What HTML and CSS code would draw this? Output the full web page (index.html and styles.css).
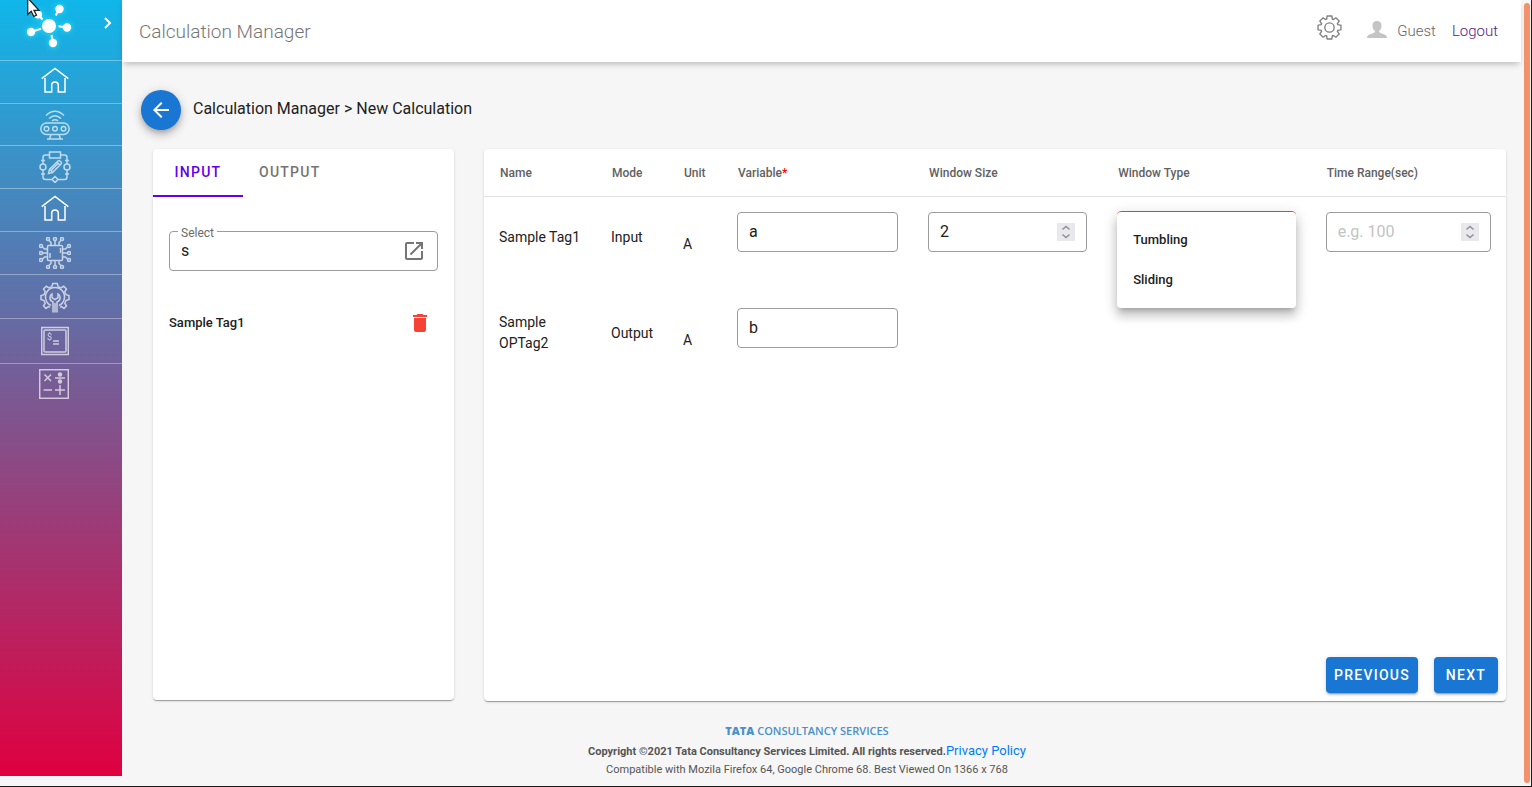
FILE: index.html
```
<!DOCTYPE html>
<html lang="en">
<head>
<meta charset="utf-8">
<meta name="viewport" content="width=device-width, initial-scale=1">
<title>Calculation Manager</title>
<link rel="stylesheet" href="styles.css">
</head>
<body>
<svg class="defs" aria-hidden="true">
  <symbol id="gear" viewBox="-12 -12 24 24">
    <path d="M-2.2-11H2.2L2.8-8 3.7-7.6 6.2-9.3 9.3-6.2 7.6-3.7 8-2.8 11-2.2V2.2L8 2.8 7.6 3.7 9.3 6.2 6.2 9.3 3.7 7.6 2.8 8 2.2 11H-2.2L-2.8 8-3.7 7.6-6.2 9.3-9.3 6.2-7.6 3.7-8 2.8-11 2.2V-2.2L-8-2.8-7.6-3.7-9.3-6.2-6.2-9.3-3.7-7.6-2.8-8Z"/>
    <circle r="4.5"/>
  </symbol>
  <symbol id="home" viewBox="0 0 28 26">
    <path d="M.7 11.7 14 1.5l13.3 10.2M4 11v14h6.7v-6.700a3.300 3.300 0 0 1 6.600 0V25H24V11"/>
  </symbol>
  <symbol id="steps" viewBox="0 0 18 18">
    <path d="M5.500 6.500 9 3.500l3.500 3M5.500 11.500 9 14.500l3.500-3"/>
  </symbol>
</svg>
<div class="app">
  <nav class="sidebar" aria-label="Main">
    <div class="brand">
      <svg class="brand-logo" width="60" height="60" viewBox="0 0 60 60" aria-hidden="true">
        <path stroke="#fff" stroke-width="2" d="m29 9-3.200 6.500M8 14l4.500 5.500M1 32l10-3.300M23 43l-1.500-8M37 27.500l-8.500-1.200"/>
        <g fill="#fff"><circle cx="19" cy="26" r="7"/><circle cx="29.500" cy="9" r="4.200"/><circle cx="8" cy="14.500" r="4"/><circle cx="1" cy="32" r="4.200"/><circle cx="23" cy="43" r="4.200"/><circle cx="37" cy="27.500" r="4.200"/></g>
      </svg>
      <button class="expand" type="button" aria-label="Expand menu">
        <svg width="10" height="14" viewBox="0 0 10 14"><path d="m2 2 5 5-5 5"/></svg>
      </button>
    </div>
    <a class="nav-item nav-item--bright" href="#" aria-label="Home"><svg width="28" height="26"><use href="#home"/></svg></a>
    <a class="nav-item nav-item--short" href="#" aria-label="Devices">
      <svg width="30" height="30" viewBox="0 0 30 30"><path d="M6 5.500q9-8.500 18 0M9 8.500q6-5.500 12 0M12 10.800q3-2 6 0"/><rect x=".8" y="13" width="28.400" height="11.400" rx="5.700"/><circle cx="6.500" cy="18.700" r="2.300"/><circle cx="15" cy="18.700" r="2.300"/><circle cx="23.500" cy="18.700" r="2.300"/><path d="m11 24.500-1.500 4.500m9.500-4.500 1.500 4.500M7 29h16"/></svg>
    </a>
    <a class="nav-item" href="#" aria-label="Workflow">
      <svg width="32" height="32" viewBox="0 0 32 32"><rect x="10.500" y="1" width="11" height="6"/><circle cx="4" cy="16" r="3"/><circle cx="28" cy="16" r="3"/><path d="m16 25.500 3 3-3 3-3-3ZM10.500 4H6.500Q4 4 4 6.500V13m17.500-9h4Q28 4 28 6.500V13M4 19v7q0 2.500 2.500 2.500H13m6 0h6.500q2.500 0 2.500-2.500v-7M2 9.500h4m20 0h4M2 23h4m20 0h4M9.500 22.500l1-4 8.500-8.500q1-.8 2 0l1 1q.8 1 0 2l-8.500 8.500zM11 18.500l3 3M18 11l3 3m-8.500 5 7-7"/></svg>
    </a>
    <a class="nav-item nav-item--bright" href="#" aria-label="Assets"><svg width="28" height="26"><use href="#home"/></svg></a>
    <a class="nav-item" href="#" aria-label="Processing">
      <svg width="32" height="32" viewBox="0 0 32 32"><rect x="8.500" y="8.500" width="15" height="15" rx="1"/><path d="M11 16v5M21.500 11v5M16 8.500V3.500M12 8.500V5.500L10 3.500m10 5v-3l2-2M16 23.500v5m-4-5v3l-2 2m10-5v3l2 2M8.500 16h-5m5-4h-3l-2-2m5 10h-3l-2 2M23.500 16h5m-5-4h3l2-2m-5 10h3l2 2"/><g><circle cx="16" cy="2" r="1.500"/><circle cx="9" cy="2" r="1.500"/><circle cx="23" cy="2" r="1.500"/><circle cx="16" cy="30" r="1.500"/><circle cx="9" cy="30" r="1.500"/><circle cx="23" cy="30" r="1.500"/><circle cx="2" cy="16" r="1.500"/><circle cx="2" cy="9" r="1.500"/><circle cx="2" cy="23" r="1.500"/><circle cx="30" cy="16" r="1.500"/><circle cx="30" cy="9" r="1.500"/><circle cx="30" cy="23" r="1.500"/></g></svg>
    </a>
    <a class="nav-item nav-item--tall" href="#" aria-label="Maintenance">
      <svg width="30" height="32" viewBox="0 0 30 32"><path d="M10 26.500 8.500 25.500 6 27.500 3.500 25 5.200 22.200 4 19.500 1 18.500v-4l3-.8 1.200-3L3.500 8 6.200 5.300 9 7l2.800-1.200L12.800 2.500h4.400l1 3.300L21 7l2.800-1.700L26.500 8l-1.700 2.700 1.200 3 3 .8v4l-3 1-1.200 2.700 1.700 2.800-2.500 2.500-2.500-2-1.500 1"/><path d="M11 24.500a9.500 9.500 0 1 1 8 0M13 31.500V21q-3.500-1.500-3-5 .2-2 2-3v3.500l3 2 3-2V13q1.800 1 2 3 .5 3.500-3 5v10.500M15 22v9.500"/></svg>
    </a>
    <a class="nav-item nav-item--console" href="#" aria-label="Console">
      <svg width="28" height="30" viewBox="0 0 28 30"><rect x=".7" y="1.500" width="26.600" height="27"/><rect x="3" y="4" width="22" height="22" rx="1"/><path d="M12 15h6m-6 3h6"/><text x="6" y="14">$</text></svg>
    </a>
    <a class="nav-item nav-item--last" href="#" aria-label="Calculations">
      <svg width="30" height="30" viewBox="0 0 30 30"><rect x=".7" y=".7" width="28.600" height="28.600"/><path d="m5.500 5.500 6.500 6.500m0-6.500L5.500 12M16 9h10M4.500 21H13m3 0h10m-5-5v10"/><circle class="dot" cx="21" cy="5.500" r="1.500"/><circle class="dot" cx="21" cy="12.500" r="1.500"/></svg>
    </a>
  </nav>

  <div class="main">
    <header class="topbar">
      <h1 class="topbar-title">Calculation Manager</h1>
      <div class="topbar-actions">
        <button class="icon-button settings" type="button" aria-label="Settings"><svg width="25" height="25"><use href="#gear"/></svg></button>
        <span class="user">
          <svg width="20" height="18" viewBox="0 0 20 18" aria-hidden="true"><path d="M10 0c3 0 4.500 2 4.500 4.700C14.500 7 13.500 9 12 10c.2 1.500 1 2 3.500 2.700C18.500 13.500 20 14.500 20 17H0c0-2.500 1.500-3.500 4.500-4.300C7 12 7.800 11.500 8 10 6.500 9 5.500 7 5.500 4.700 5.500 2 7 0 10 0Z"/></svg>
          Guest
        </span>
        <a class="logout" href="#">Logout</a>
      </div>
    </header>

    <main class="content">
      <div class="crumbs">
        <button class="back" type="button" aria-label="Back"><svg width="24" height="24" viewBox="0 0 24 24"><path d="M20 11H7.830l5.590-5.590L12 4l-8 8 8 8 1.410-1.410L7.830 13H20v-2z"/></svg></button>
        <h2 class="crumbs-text">Calculation Manager &gt; New Calculation</h2>
      </div>

      <div class="panels">
        <section class="card tags">
          <div class="tabs" role="tablist">
            <button class="tab tab--active" type="button" role="tab" aria-selected="true">INPUT</button>
            <button class="tab" type="button" role="tab" aria-selected="false">OUTPUT</button>
          </div>
          <div class="tags-body">
            <div class="field tag-search">
              <label class="field-label" for="tag">Select</label>
              <input class="field-input" id="tag" type="text" value="s">
              <button class="icon-button open" type="button" aria-label="Open tag browser"><svg width="24" height="24" viewBox="0 0 24 24"><path d="M19 19H5V5h7V3H5a2 2 0 0 0-2 2v14a2 2 0 0 0 2 2h14c1.100 0 2-.9 2-2v-7h-2v7zM14 3v2h3.590l-9.830 9.830 1.410 1.410L19 6.410V10h2V3h-7z"/></svg></button>
            </div>
            <div class="tag-row">
              <span class="tag-name">Sample Tag1</span>
              <button class="icon-button delete" type="button" aria-label="Delete Sample Tag1"><svg width="24" height="24" viewBox="0 0 24 24"><path d="M6 19c0 1.100.9 2 2 2h8c1.100 0 2-.9 2-2V7H6v12zM19 4h-3.500l-1-1h-5l-1 1H5v2h14V4z"/></svg></button>
            </div>
          </div>
        </section>

        <section class="card variables">
          <table class="grid">
            <colgroup><col class="c-name"><col class="c-mode"><col class="c-unit"><col class="c-variable"><col class="c-size"><col class="c-type"><col></colgroup>
            <thead>
              <tr><th>Name</th><th>Mode</th><th>Unit</th><th>Variable<span class="required">*</span></th><th>Window Size</th><th>Window Type</th><th>Time Range(sec)</th></tr>
            </thead>
            <tbody>
              <tr>
                <td class="text">Sample Tag1</td>
                <td class="text">Input</td>
                <td>A</td>
                <td class="control"><div class="field"><input class="field-input" type="text" value="a" aria-label="Variable for Sample Tag1"></div></td>
                <td class="control"><div class="field"><input class="field-input" type="number" value="2" aria-label="Window size"><svg class="steps" width="18" height="18" aria-hidden="true"><use href="#steps"/></svg></div></td>
                <td class="control control--select">
                  <div class="picker">
                    <select class="picker-select" aria-label="Window type"><option></option><option>Tumbling</option><option>Sliding</option></select>
                    <ul class="menu" role="listbox"><li role="option">Tumbling</li><li role="option">Sliding</li></ul>
                  </div>
                </td>
                <td class="control"><div class="field"><input class="field-input" type="number" placeholder="e.g. 100" aria-label="Time range in seconds"><svg class="steps" width="18" height="18" aria-hidden="true"><use href="#steps"/></svg></div></td>
              </tr>
              <tr>
                <td class="text">Sample OPTag2</td>
                <td class="text">Output</td>
                <td>A</td>
                <td class="control"><div class="field"><input class="field-input" type="text" value="b" aria-label="Variable for Sample OPTag2"></div></td>
                <td></td><td></td><td></td>
              </tr>
            </tbody>
          </table>
          <div class="actions">
            <button class="button" type="button">PREVIOUS</button>
            <button class="button button--next" type="button">NEXT</button>
          </div>
        </section>
      </div>
    </main>

    <footer class="footer">
      <div class="company"><strong>TATA</strong> CONSULTANCY SERVICES</div>
      <div class="copyright"><b>Copyright ©2021 Tata Consultancy Services Limited. All rights reserved.</b><a href="#">Privacy Policy</a></div>
      <div class="compat">Compatible with Mozila Firefox 64, Google Chrome 68. Best Viewed On 1366 x 768</div>
    </footer>
  </div>
  <div class="rail" aria-hidden="true"><div class="rail-thumb"></div></div>
</div>
<svg class="pointer" width="14" height="19" viewBox="0 0 14 19" aria-hidden="true"><path d="M.7-2v16.500l3.500-3.200 2.600 5.200 2.700-1.300L7 10.300h5z"/></svg>
</body>
</html>
```
FILE: styles.css
```
*, *::before, *::after { box-sizing: border-box; }

body {
  margin: 0;
  font-family: Roboto, "Liberation Sans", sans-serif;
  font-size: 14px;
  color: #212121;
  background: #f6f6f6;
}

button, input, select { font: inherit; color: inherit; }
button { padding: 0; border: 0; background: none; cursor: pointer; }
svg { display: block; }
.defs { position: absolute; width: 0; height: 0; }

.app {
  display: flex;
  min-height: 100vh;
  border: solid #1c1c1c;
  border-width: 0 1px 1px 0;
}

/* Sidebar */
.sidebar {
  flex: none;
  width: 122px;
  margin-bottom: 10px;
  background: linear-gradient(#10b6e9, #e00040);
}
.brand {
  display: flex;
  height: 61px;
  padding-left: 30px;
  border-bottom: 1px solid rgba(255, 255, 255, .35);
}
.brand-logo { overflow: visible; filter: drop-shadow(0 0 3px #2ef); }
.expand { align-self: flex-start; margin: 16px 0 0 13px; }
.expand path { fill: none; stroke: #fff; stroke-width: 2; }
.nav-item {
  display: flex;
  align-items: center;
  justify-content: center;
  height: 43px;
  padding-right: 12px;
  border-bottom: 1px solid rgba(255, 255, 255, .35);
}
.nav-item--short { height: 42px; }
.nav-item--tall { height: 44px; }
.nav-item--console { height: 45px; padding-right: 13px; }
.nav-item--last { padding: 0 14px 4px 0; border: 0; }
.nav-item svg { fill: none; stroke: #fff; stroke-width: 1.5; opacity: .68; }
.nav-item--bright { padding-bottom: 4px; }
.nav-item--bright svg { opacity: 1; stroke-width: 1.5; }
.nav-item text { font-size: 9px; fill: #fff; stroke: none; }
.nav-item .dot { fill: #fff; }

/* Header */
.main { flex: 1; min-width: 0; display: flex; flex-direction: column; }
.topbar {
  display: flex;
  align-items: center;
  justify-content: space-between;
  height: 62px;
  padding: 0 23px 0 17px;
  background: #fff;
  box-shadow: 0 4px 6px -2px rgba(0, 0, 0, .25);
}
.topbar-title { margin: 0; font-size: 19px; font-weight: 300; color: #757575; }
.topbar-actions { display: flex; align-items: center; font-size: 15px; font-weight: 300; }
.settings { margin: 0 25px 7px 0; }
.settings svg { fill: none; stroke: #808080; stroke-width: 1.3; }
.user { display: flex; align-items: center; gap: 10px; color: #666; }
.user svg { margin-bottom: 2px; fill: #c4c4c4; }
.logout { margin-left: 16px; color: #551a8b; text-decoration: none; }

/* Page content */
.content { flex: 1; display: flex; flex-direction: column; padding: 28px 15px 0 19px; }
.crumbs { display: flex; align-items: center; gap: 12px; }
.crumbs-text { margin: 0 0 4px; font-size: 16px; font-weight: 400; }
.back {
  display: flex;
  align-items: center;
  justify-content: center;
  width: 40px;
  height: 40px;
  border-radius: 50%;
  background: #1976d2;
  box-shadow: 0 3px 5px -1px rgba(0, 0, 0, .2), 0 6px 10px rgba(0, 0, 0, .14), 0 1px 12px rgba(0, 0, 0, .12);
}
.back svg { width: 24px; fill: #fff; }
.panels { flex: 1; display: flex; gap: 30px; padding: 19px 0 0 12px; }
.card {
  background: #fff;
  border-radius: 4px;
  box-shadow: 0 2px 1px -1px rgba(0, 0, 0, .2), 0 1px 1px rgba(0, 0, 0, .14), 0 1px 3px rgba(0, 0, 0, .12);
}
.tags { flex: none; width: 301px; margin-bottom: 1px; }
.variables { flex: 1; min-width: 0; display: flex; flex-direction: column; justify-content: space-between; }

.tabs { display: flex; height: 48px; }
.tab {
  min-width: 90px;
  padding: 0 16px;
  border-bottom: 2px solid transparent;
  font-weight: 500;
  letter-spacing: 0.09em;
  color: #757575;
}
.tab--active { color: #6200ee; border-color: #6200ee; }
.tags-body { padding: 34px 16px; }

.field {
  display: flex;
  align-items: center;
  height: 40px;
  padding: 0 11px;
  border: 1px solid #9b9b9b;
  border-radius: 4px;
}
.field-input {
  flex: 1;
  min-width: 0;
  padding: 0 0 2px;
  border: 0;
  outline: 0;
  background: none;
  font-size: 16px;
  appearance: textfield;
}
.field-input::-webkit-inner-spin-button { display: none; }
.field-input::placeholder { color: #c3c3c3; opacity: 1; }
.steps { flex: none; background: #e9e9ed; fill: none; stroke: #8f8f9d; stroke-width: 1.5; }
.tag-search { position: relative; }
.field-label {
  position: absolute;
  top: -7px;
  left: 8px;
  padding: 0 3px;
  background: #fff;
  font-size: 12px;
  line-height: 16px;
  color: #6b6b6b;
}
.open { fill: #757575; }
.tag-row {
  display: flex;
  align-items: center;
  justify-content: space-between;
  padding: 40px 6px 0 0;
  font-size: 13px;
  font-weight: 500;
}
.tag-name { padding-bottom: 2px; }
.delete { fill: #f44336; }

/* Variables table */
.grid { width: 100%; table-layout: fixed; border-collapse: separate; border-spacing: 0; }
.c-name { width: 112px; }
.c-mode { width: 72px; }
.c-unit { width: 54px; }
.c-variable { width: 18.7%; }
.c-size { width: 18.5%; }
.c-type { width: 20.4%; }
.grid th {
  height: 48px;
  padding: 0 0 0 16px;
  border-bottom: 1px solid #e0e0e0;
  font-size: 12px;
  font-weight: 500;
  text-align: left;
  color: #616161;
}
.required { color: #f00; }
.grid td { height: 96px; padding: 0 15px 2px; line-height: 21px; }
.grid .text { padding-bottom: 16px; }
.grid .control { padding-top: 15px; vertical-align: top; }
.grid .control--select { padding-top: 14px; }
.picker { position: relative; }
.picker-select {
  display: block;
  width: 100%;
  height: 42px;
  border: 1px solid #f44336;
  border-radius: 4px;
  background: #fff;
  appearance: none;
}
.menu {
  position: absolute;
  top: 1px;
  left: 0;
  right: 0;
  margin: 0;
  padding: 8px 0;
  list-style: none;
  background: #fff;
  border-radius: 4px;
  box-shadow: 0 5px 5px -3px rgba(0, 0, 0, .2), 0 8px 10px 1px rgba(0, 0, 0, .14), 0 3px 14px 2px rgba(0, 0, 0, .12);
  font-size: 13px;
  font-weight: 500;
}
.menu li { padding: 0 16px; line-height: 40px; }

.actions { display: flex; justify-content: flex-end; gap: 16px; padding: 8px; }
.button {
  height: 36px;
  padding: 0 8px;
  border-radius: 4px;
  background: #1976d2;
  color: #fff;
  font-weight: 500;
  letter-spacing: 0.09em;
  box-shadow: 0 3px 1px -2px rgba(0, 0, 0, .2), 0 2px 2px rgba(0, 0, 0, .14), 0 1px 5px rgba(0, 0, 0, .12);
}
.button--next { min-width: 64px; }

/* Footer */
.footer { padding: 20px 29px 9px 0; text-align: center; color: #555; font-size: 11px; }
.company { font-family: "Open Sans", "Noto Sans", sans-serif; font-weight: 600; line-height: 19px; color: #4a90cb; }
.company strong { font-weight: 800; }
.copyright { line-height: 22px; }
.copyright a { font-size: 13px; color: #007bff; text-decoration: none; }
.compat { line-height: 14px; }

/* Scroll rail and pointer */
.rail { flex: none; display: flex; width: 10px; padding: 3px 1px 3px 3px; }
.rail-thumb { flex: 1; border-radius: 3px; background: #f2916b; }
.pointer { position: absolute; top: 0; left: 27px; pointer-events: none; }
.pointer path { fill: #fff; stroke: #222; stroke-width: 1.3; }
```
